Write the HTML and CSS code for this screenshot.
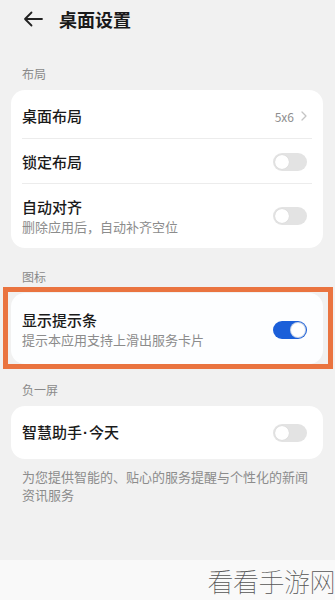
FILE: index.html
```html
<!DOCTYPE html>
<html lang="zh-CN">
<head>
<meta charset="utf-8">
<title>桌面设置</title>
<link rel="stylesheet" href="styles.css">
</head>
<body>
<div class="screen">
  <header class="topbar">
    <svg class="back" width="20" height="16" viewBox="0 0 20 16"><path d="M19 8H2M8.5 1.5L2 8l6.5 6.5" fill="none" stroke="#222" stroke-width="1.8" stroke-linecap="round" stroke-linejoin="round"/></svg>
    <h1 class="title">桌面设置</h1>
  </header>

  <div class="label first">布局</div>
  <div class="card">
    <div class="row r1">
      <div class="row-text"><div class="row-title">桌面布局</div></div>
      <div class="value">5x6 <svg class="chev" width="6" height="10" viewBox="0 0 6 10"><path d="M1 1l4 4-4 4" fill="none" stroke="#c4c4c4" stroke-width="1.3" stroke-linecap="round" stroke-linejoin="round"/></svg></div>
    </div>
    <div class="row r2">
      <div class="row-text"><div class="row-title">锁定布局</div></div>
      <div class="toggle"><span class="knob"></span></div>
    </div>
    <div class="row r3">
      <div class="row-text"><div class="row-title">自动对齐</div><div class="row-sub">删除应用后，自动补齐空位</div></div>
      <div class="toggle"><span class="knob"></span></div>
    </div>
  </div>

  <div class="label">图标</div>
  <div class="card highlighted">
    <div class="row r4">
      <div class="row-text"><div class="row-title">显示提示条</div><div class="row-sub">提示本应用支持上滑出服务卡片</div></div>
      <div class="toggle on"><span class="knob"></span></div>
    </div>
  </div>

  <div class="label third">负一屏</div>
  <div class="card">
    <div class="row r5">
      <div class="row-text"><div class="row-title">智慧助手<span class="dot">·</span>今天</div></div>
      <div class="toggle"><span class="knob"></span></div>
    </div>
  </div>
  <p class="note">为您提供智能的、贴心的服务提醒与个性化的新闻资讯服务</p>
</div>
<div class="watermark">看看手游网</div>
</body>
</html>
```
FILE: styles.css
```css
* { box-sizing: border-box; }
html, body { margin: 0; padding: 0; }
body {
  width: 335px;
  height: 600px;
  overflow: hidden;
  background: #f9f9f9;
  font-family: "Noto Sans CJK SC", "Noto Sans", sans-serif;
  color: #1a1a1a;
}
.screen {
  height: 560px;
  background: #f1f1f1;
  padding-top: 1px;
}
.topbar {
  height: 35px;
  display: flex;
  align-items: center;
  padding-left: 23px;
}
.back { flex: none; }
.title {
  margin: 0 0 0 16px;
  font-size: 18px;
  font-weight: 700;
  line-height: 24px;
  color: #1a1a1a;
}
.label {
  font-size: 12px;
  line-height: 16px;
  color: #8a8a8a;
  padding: 0 22px;
  margin: 21px 0 8px;
}
.label.first { margin-top: 30px; }
.label.third { margin-top: 18px; }
.card {
  margin: 0 12px 0 11px;
  background: #fff;
  border-radius: 14px;
  position: relative;
}
.row {
  margin: 0 11px;
  display: flex;
  align-items: center;
  justify-content: space-between;
  border-bottom: 1px solid #ececec;
}
.row:last-child { border-bottom: none; }
.r1 { height: 49px; padding-top: 4px; }
.r2 { height: 45px; padding-top: 2px; }
.r3 { height: 64px; }
.r4 { height: 71px; padding-top: 2px; }
.r5 { height: 53px; }
.row-title {
  font-size: 15px;
  line-height: 20px;
  font-weight: 500;
  color: #1a1a1a;
}
.dot {
  font-family: "Liberation Sans", sans-serif;
  font-weight: 700;
  margin: 0 1px;
}
.row-sub {
  font-size: 13px;
  line-height: 18px;
  color: #8c8c8c;
  margin-top: 1px;
}
.value {
  display: flex;
  align-items: center;
  gap: 7px;
  font-size: 12px;
  color: #8e8e8e;
  margin-right: 5px;
}
.chev { display: block; }
.toggle {
  width: 34px;
  height: 18px;
  border-radius: 9px;
  background: #e3e3e3;
  position: relative;
  margin-right: 5px;
  flex: none;
}
.toggle .knob {
  position: absolute;
  top: 2px;
  left: 2px;
  width: 14px;
  height: 14px;
  border-radius: 50%;
  background: #fff;
  box-shadow: 0 0 1px rgba(0,0,0,0.15);
}
.toggle.on { background: #1b5fd9; }
.toggle.on .knob {
  left: auto;
  right: 2px;
  box-shadow: 0 0 0 1px #c7d3e6;
}
.highlighted { background: #fdfeff; }
.highlighted::after {
  content: "";
  position: absolute;
  top: -6px;
  bottom: -5px;
  left: -8px;
  right: -10px;
  border: 5px solid #ea7440;
  pointer-events: none;
}
.note {
  margin: 9px 0 0;
  padding: 0 22px 0 22px;
  font-size: 13px;
  line-height: 18px;
  color: #8c8c8c;
}
.watermark {
  height: 40px;
  display: flex;
  align-items: center;
  justify-content: flex-end;
  font-size: 26px;
  font-weight: 100;
  color: #555;
  letter-spacing: -0.5px;
  white-space: nowrap;
}
```
